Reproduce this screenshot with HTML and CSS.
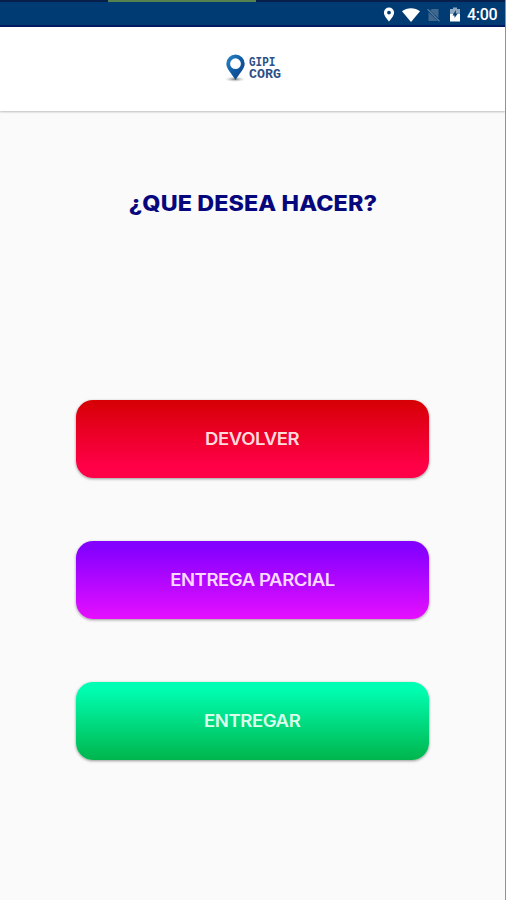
FILE: index.html
```html
<!DOCTYPE html>
<html lang="es">
<head>
<meta charset="utf-8">
<title>GIPI CORG</title>
<link rel="stylesheet" href="styles.css">
</head>
<body>
<div class="screen">
  <div class="status">
    <span class="progress"></span>
    <svg class="pin" width="12" height="15" viewBox="0 0 12 15"><path fill="#fff" fill-rule="evenodd" d="M6 .5A5.1 5.1 0 0 0 .9 5.6C.9 9.2 6 14.5 6 14.5s5.1-5.3 5.1-8.9A5.1 5.1 0 0 0 6 .5zm0 3.2a1.9 1.9 0 1 1 0 3.8 1.9 1.9 0 0 1 0-3.8z"/></svg>
    <svg class="wifi" width="18" height="14" viewBox="0 0 18 14"><path fill="#fff" d="M0 3.2C5-.8 13-.8 18 3.2L9 14z"/></svg>
    <svg class="sim" width="13" height="14" viewBox="0 0 13 14"><path fill="#40678e" d="M4.8 1H11.5v9.3L3.2 2.6zM1.5 4.2l9.2 8.8H1.5z"/><path d="M.6 1.2l11.8 12" stroke="#557a9c" stroke-width="1.3"/></svg>
    <svg class="battery" width="10" height="15" viewBox="0 0 10 15"><path fill="#8da8c0" d="M0 2h3V.5h4V2h3v5H0z"/><path fill="#fff" d="M0 7h10v7.5H0z"/><path fill="#063c72" d="M5.8 3L2.5 8.4h2V11L7.8 6.6h-2z"/></svg>
    <span class="clock">4:00</span>
  </div>
  <header class="bar">
    <svg class="logo-pin" width="24" height="30" viewBox="0 0 24 30">
      <defs>
        <linearGradient id="pinFill" x1="0" y1="0" x2="1" y2="1"><stop offset="0" stop-color="#2a8ac6"/><stop offset=".5" stop-color="#0f5ba5"/><stop offset="1" stop-color="#123d80"/></linearGradient>
        <radialGradient id="pinShade"><stop offset="0" stop-color="#777"/><stop offset="1" stop-color="#ccc" stop-opacity="0"/></radialGradient>
      </defs>
      <ellipse cx="11" cy="25.2" rx="10.5" ry="2.8" fill="url(#pinShade)"/>
      <path fill="url(#pinFill)" fill-rule="evenodd" d="M11.5.5A9.2 9.2 0 0 0 2.3 9.7C2.3 15 8.5 20.5 11.5 26 14.5 20.5 20.7 15 20.7 9.7A9.2 9.2 0 0 0 11.5.5zm0 3.8a5.4 5.4 0 1 1 0 10.8 5.4 5.4 0 0 1 0-10.8z"/>
    </svg>
    <div class="brand"><span class="gipi">GIPI</span><span class="corg">CORG</span></div>
  </header>
  <main class="content">
    <h1 class="title">¿QUE DESEA HACER?</h1>
    <div class="actions">
      <button class="action red"><span class="label">DEVOLVER</span></button>
      <button class="action purple"><span class="label">ENTREGA PARCIAL</span></button>
      <button class="action green"><span class="label">ENTREGAR</span></button>
    </div>
  </main>
</div>
</body>
</html>
```
FILE: styles.css
```css
* { box-sizing: border-box; }
body { margin: 0; }
.screen {
  width: 506px;
  height: 900px;
  display: flex;
  flex-direction: column;
  background: #fafafa;
  border-right: 1px solid #8f9194;
  overflow: hidden;
}
.status {
  position: relative;
  flex: none;
  height: 27px;
  display: flex;
  align-items: center;
  justify-content: flex-end;
  padding: 2px 8px 0 0;
  background: linear-gradient(#091f4b 0 2px, #003c73 2px 25px, #001a60 25px);
}
.status svg { flex: none; }
.progress {
  position: absolute;
  left: 108px;
  top: 0;
  width: 148px;
  height: 2px;
  background: #56824f;
}
.pin { margin-right: 7px; }
.wifi { margin-right: 7px; }
.sim { margin-right: 10px; }
.battery { margin-right: 7px; }
.clock {
  width: 30px;
  padding-top: 1px;
  font: 500 16px/20px Roboto, sans-serif;
  letter-spacing: -0.3px;
  color: #fff;
  white-space: nowrap;
}
.bar {
  flex: none;
  height: 84px;
  display: flex;
  justify-content: center;
  padding-top: 26px;
  background: #fff;
  box-shadow: 0 1px 2px rgba(0, 0, 0, .25);
}
.logo-pin { margin-top: 1px; }
.brand {
  display: flex;
  flex-direction: column;
  align-items: flex-start;
  width: 33px;
  padding: 4px 0 0 1px;
  font: bold 10px/12px "Liberation Mono", monospace;
  color: #2b5087;
}
.brand span {
  transform-origin: 0 50%;
}
.gipi { transform: scale(1.1, 1.3); }
.corg { transform: scale(1.33, 1.3); }
.content {
  flex: 1;
  display: flex;
  flex-direction: column;
  align-items: center;
}
.title {
  margin: 79px 0 0;
  font: 800 21px/28px Inter, sans-serif;
  letter-spacing: 0.1px;
  color: #07077d;
  white-space: nowrap;
  transform: scaleX(1.11);
}
.actions {
  display: flex;
  flex-direction: column;
  gap: 63px;
  margin-top: 182px;
}
.action {
  width: 353px;
  height: 78px;
  padding: 0;
  border: 0;
  border-radius: 17px;
  font: 600 17px/24px Inter, sans-serif;
  letter-spacing: -0.4px;
  box-shadow: 0 1px 3px rgba(0, 0, 0, .4);
}
.label {
  display: inline-block;
  transform: scaleX(1.09);
}
.red { background: linear-gradient(#d60004, #ff0048 85%); color: #ffdadd; }
.purple { background: linear-gradient(#8400ff 8%, #e60fff); color: #f8daff; }
.green { background: linear-gradient(#00ffb3 8%, #00b54c); color: #dcffec; }
```
